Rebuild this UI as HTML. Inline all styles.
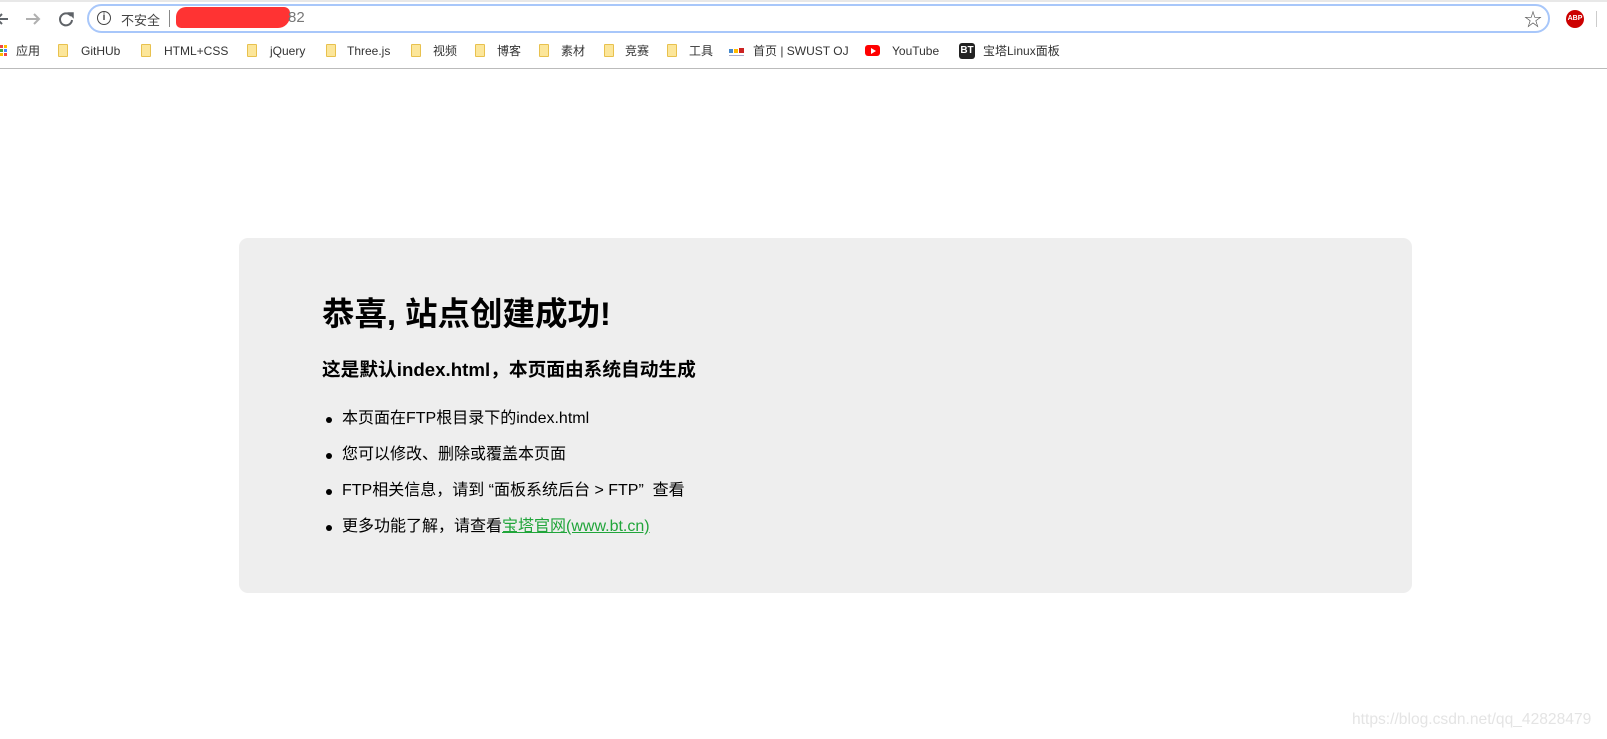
<!DOCTYPE html>
<html><head><meta charset="utf-8"><style>
*{margin:0;padding:0;box-sizing:border-box}
body{width:1607px;height:739px;background:#fff;position:relative;overflow:hidden;font-family:"Liberation Sans","Noto Sans CJK SC",sans-serif;color:#000}
.a{position:absolute;white-space:nowrap}
.bm{font-size:12px;color:#333;top:44px;line-height:14px}
.fd{position:absolute;top:44px;width:10px;height:13px;background:#fce69a;border:1px solid #e8c14e;border-radius:1px}
.card{position:absolute;left:239px;top:238px;width:1173px;height:355px;background:#eee;border-radius:9px}
li{position:absolute;left:342px;font-size:16px;list-style:none;white-space:nowrap;line-height:20px}
li:before{content:"";position:absolute;left:-16px;top:8px;width:6px;height:6px;border-radius:50%;background:#000}
</style></head><body>
<div class="a" style="left:0;top:0;width:1607px;height:2px;background:#e8e8e8"></div>
<svg class="a" style="left:0;top:10px" width="80" height="18" viewBox="0 0 80 18"><path d="M-2 9H8M2 4L-3 9 2 14" stroke="#5f6368" stroke-width="2" fill="none"/><path d="M26 9H39M34 4L39 9 34 14" stroke="#b0b0b0" stroke-width="2" fill="none"/><path d="M71 6A6 6 0 1 0 72 10" stroke="#5f6368" stroke-width="2" fill="none"/><path d="M69 3H73V7Z" fill="#5f6368" stroke="#5f6368" stroke-width="1.5"/></svg>
<div class="a" style="left:87px;top:4px;width:1463px;height:29px;border:2px solid #a8c7fa;border-radius:15px"></div>
<div class="a" style="left:97px;top:11px;width:14px;height:14px;border:1.6px solid #444;border-radius:50%;font-size:10px;line-height:11px;text-align:center;font-weight:bold;color:#444">i</div>
<div class="a" style="left:121px;top:10px;font-size:13px;color:#444">不安全</div>
<div class="a" style="left:169px;top:10px;width:1px;height:17px;background:#888"></div>
<div class="a" style="left:176px;top:7px;width:114px;height:21px;background:#f33;border-radius:10px 6px 12px 5px"></div>
<div class="a" style="left:288px;top:9px;font-size:15px;color:#777">82</div>
<div class="a" style="left:1524px;top:6px;font-size:18px;color:#555">☆</div>
<div class="a" style="left:1566px;top:10px;width:18px;height:18px;border-radius:50%;background:#c00;color:#fff;font-size:7px;font-weight:bold;line-height:18px;text-align:center">ABP</div>
<div class="a" style="left:1596px;top:11px;width:1px;height:16px;background:#ccc"></div>
<svg class="a" style="left:0;top:45px" width="8" height="12"><rect x="0" y="0" width="3" height="3" fill="#e44"/><rect x="4" y="0" width="3" height="3" fill="#fb0"/><rect x="0" y="4" width="3" height="3" fill="#4a4"/><rect x="4" y="4" width="3" height="3" fill="#48f"/><rect x="0" y="8" width="3" height="3" fill="#fb0"/><rect x="4" y="8" width="3" height="3" fill="#e44"/></svg>
<div class="a bm" style="left:16px">应用</div>
<div class="fd" style="left:58px"></div><div class="a bm" style="left:81px">GitHUb</div>
<div class="fd" style="left:141px"></div><div class="a bm" style="left:164px">HTML+CSS</div>
<div class="fd" style="left:247px"></div><div class="a bm" style="left:270px">jQuery</div>
<div class="fd" style="left:326px"></div><div class="a bm" style="left:347px">Three.js</div>
<div class="fd" style="left:411px"></div><div class="a bm" style="left:433px">视频</div>
<div class="fd" style="left:475px"></div><div class="a bm" style="left:497px">博客</div>
<div class="fd" style="left:539px"></div><div class="a bm" style="left:561px">素材</div>
<div class="fd" style="left:604px"></div><div class="a bm" style="left:625px">竞赛</div>
<div class="fd" style="left:667px"></div><div class="a bm" style="left:689px">工具</div>
<svg class="a" style="left:729px;top:44px" width="16" height="14"><rect x="0" y="5" width="4" height="4" fill="#48c"/><rect x="5" y="5" width="4" height="4" fill="#fb0"/><rect x="10" y="4" width="5" height="5" fill="#c22"/><rect x="0" y="11" width="15" height="1" fill="#aac"/></svg>
<div class="a bm" style="left:753px">首页 | SWUST OJ</div>
<div class="a" style="left:865px;top:45px;width:15px;height:11px;background:#f00;border-radius:3px"></div>
<div class="a" style="left:871px;top:48px;width:0;height:0;border-left:5px solid #fff;border-top:3px solid transparent;border-bottom:3px solid transparent"></div>
<div class="a bm" style="left:892px">YouTube</div>
<div class="a" style="left:959px;top:43px;width:16px;height:16px;background:#222;border-radius:3px;color:#fff;font-size:10px;line-height:16px;text-align:center;font-weight:bold">BT</div>
<div class="a bm" style="left:983px">宝塔Linux面板</div>
<div class="a" style="left:0;top:68px;width:1607px;height:1px;background:#bbb"></div>
<div class="card"></div>
<div class="a" style="left:322px;top:294px;font-size:32.5px;font-weight:bold;line-height:40px">恭喜, 站点创建成功!</div>
<div class="a" style="left:322px;top:358px;font-size:18.7px;font-weight:bold;line-height:24px">这是默认index.html，本页面由系统自动生成</div>
<ul>
<li style="top:409px">本页面在FTP根目录下的index.html</li>
<li style="top:445px">您可以修改、删除或覆盖本页面</li>
<li style="top:481px">FTP相关信息，请到 “面板系统后台 &gt; FTP” &nbsp;查看</li>
<li style="top:517px">更多功能了解，请查看<span style="color:#20a53a;text-decoration:underline">宝塔官网(www.bt.cn)</span></li>
</ul>
<div class="a" style="left:1352px;top:711px;font-size:15.6px;color:#e4e4e4">https://blog.csdn.net/qq_42828479</div>
</body></html>
